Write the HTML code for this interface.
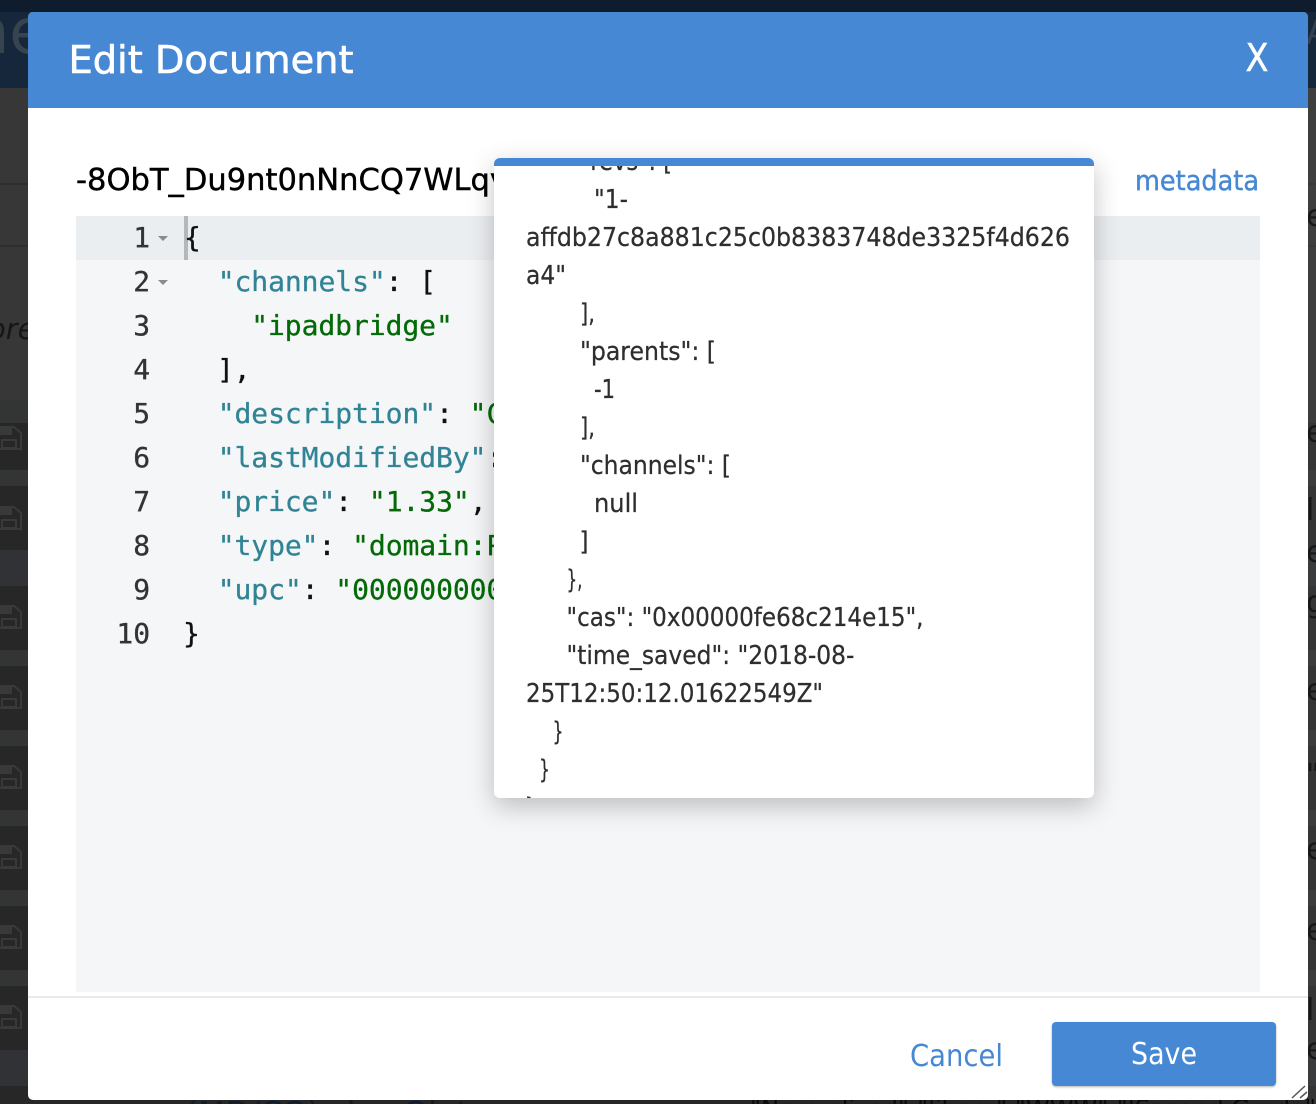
<!DOCTYPE html>
<html><head><meta charset="utf-8"><style>
html,body{margin:0;padding:0;background:#333}
#r{position:relative;width:1316px;height:1104px;overflow:hidden;background:#363736}
.a{position:absolute}
svg{position:absolute;left:0;top:0;overflow:hidden}
.s{font-family:"DejaVu Sans","Liberation Sans",sans-serif}
.m{font-family:"DejaVu Sans Mono","Liberation Mono",monospace;font-size:28px;letter-spacing:-.06px;stroke-width:.3px}
.k{fill:#318495;stroke:#318495}.t{fill:#036a07;stroke:#036a07}.p{fill:#111;stroke:#111}.n{fill:#333;stroke:#333;text-anchor:end}
</style></head><body><div id="r">
<!-- background page -->
<div class="a" style="left:0;top:0;width:1316px;height:12px;background:#0e1c2e"></div>
<div class="a" style="left:0;top:12px;width:1316px;height:76px;background:#17273b"></div>
<div class="a" style="left:0;top:183px;width:1316px;height:2px;background:#2e2e2e"></div>
<div class="a" style="left:0;top:245px;width:1316px;height:2px;background:#2e2e2e"></div>
<div class="a" style="left:0;top:423px;width:1316px;height:681px;background:#272727"></div>
<div class="a" style="left:0;top:400px;width:1316px;height:23px;background:#333434"></div>
<div class="a" style="left:0;top:470px;width:1316px;height:16px;background:#333434"></div>
<div class="a" style="left:0;top:550px;width:1316px;height:36px;background:#303235"></div>
<div class="a" style="left:0;top:650px;width:1316px;height:16px;background:#333434"></div>
<div class="a" style="left:0;top:730px;width:1316px;height:16px;background:#333434"></div>
<div class="a" style="left:0;top:810px;width:1316px;height:16px;background:#333434"></div>
<div class="a" style="left:0;top:890px;width:1316px;height:16px;background:#333434"></div>
<div class="a" style="left:0;top:970px;width:1316px;height:16px;background:#333434"></div>
<div class="a" style="left:0;top:1050px;width:1316px;height:36px;background:#303235"></div>
<div class="a" style="left:1308px;top:88px;width:8px;height:1016px;background:rgba(70,70,70,.45)"></div>
<svg width="1316" height="1104" viewBox="0 0 1316 1104">
<defs><g id="f" fill="none" stroke="#393939" stroke-width="2"><path d="M-6 1H14L21 7V23H-6Z"/><path d="M2 14H16V22H2Z"/><path d="M-6 1H11V8H-6Z" fill="#393939"/></g></defs>
<use href="#f" x="0" y="426"/><use href="#f" x="0" y="506"/><use href="#f" x="0" y="605"/><use href="#f" x="0" y="685"/><use href="#f" x="0" y="765"/><use href="#f" x="0" y="845"/><use href="#f" x="0" y="925"/><use href="#f" x="0" y="1005"/>
<text class="s" x="-30" y="53" font-size="62" fill="#37434f">ne</text>
<text class="s" x="1306" y="44" font-size="34" fill="#34404f">A</text>
<text class="s" x="-12" y="339" font-size="29" font-style="italic" fill="#161616">ore</text>
<g class="s" font-size="30" fill="#171717">
<text x="1306" y="226">e</text><text x="1306" y="442">e</text><text x="1306" y="520">l</text><text x="1306" y="562">e</text><text x="1306" y="612">g</text><text x="1306" y="700">e</text><text x="1306" y="785">"</text><text x="1306" y="859">e</text><text x="1306" y="940">e</text><text x="1306" y="1020">l</text><text x="1306" y="1059">e</text>
</g>
<text class="s" x="186" y="1121" font-size="28" fill="#0e1c2e" textLength="400" lengthAdjust="spacingAndGlyphs">(MD/CO) chocOlate syrup</text>
<text class="s" x="750" y="1118" font-size="26" fill="#0a0a0a" textLength="566" lengthAdjust="spacingAndGlyphs">"Normalized":"libero","WWW":"ISecond Grade"</text>
</svg>
<!-- modal -->
<div class="a" style="left:28px;top:12px;width:1280px;height:1088px;background:#fff;border-radius:5px;overflow:hidden">
 <div class="a" style="left:0;top:0;width:1280px;height:96px;background:#4688d3"></div>
 <div class="a" style="left:48px;top:204px;width:1184px;height:776px;background:#f5f6f8"></div>
 <div class="a" style="left:48px;top:204px;width:1184px;height:44px;background:#ebeef1"></div>
 <div class="a" style="left:156px;top:204px;width:4px;height:44px;background:#b4b8bc"></div>
 <div class="a" style="left:0;top:984px;width:1280px;height:2px;background:#eaeaea"></div>
 <div class="a" style="left:1024px;top:1010px;width:224px;height:64px;background:#4688d3;border-radius:4px;box-shadow:0 1px 2px rgba(0,0,0,.3)"></div>
</div>
<svg width="1316" height="1104" viewBox="0 0 1316 1104">
<g class="s">
<text x="68.5" y="73" font-size="38" fill="#fff" stroke="#fff" stroke-width=".6" textLength="285" lengthAdjust="spacingAndGlyphs">Edit Document</text>
<text x="1245.5" y="71" font-size="38" fill="#fff" stroke="#fff" stroke-width=".5" textLength="23" lengthAdjust="spacingAndGlyphs">X</text>
<text x="76" y="190" font-size="30" fill="#000" stroke="#000" stroke-width=".4" textLength="432" lengthAdjust="spacingAndGlyphs">-8ObT_Du9nt0nNnCQ7WLqv</text>
<text x="1135" y="190" font-size="28" fill="#4688d3" stroke="#4688d3" stroke-width=".4" textLength="124" lengthAdjust="spacingAndGlyphs">metadata</text>
<text x="910" y="1066" font-size="30" fill="#4688d3" textLength="93" lengthAdjust="spacingAndGlyphs">Cancel</text>
<text x="1131" y="1064" font-size="30" fill="#fff" textLength="66" lengthAdjust="spacingAndGlyphs">Save</text>
</g>
<g class="m">
<text class="n" x="150" y="247">1</text><text class="n" x="150" y="291">2</text><text class="n" x="150" y="335">3</text><text class="n" x="150" y="379">4</text><text class="n" x="150" y="423">5</text><text class="n" x="150" y="467">6</text><text class="n" x="150" y="511">7</text><text class="n" x="150" y="555">8</text><text class="n" x="150" y="599">9</text><text class="n" x="150" y="643">10</text>
<text class="p" x="184" y="247">{</text>
<text x="217.7" y="291"><tspan class="k">"channels"</tspan><tspan class="p">: [</tspan></text>
<text class="t" x="251.2" y="335">"ipadbridge"</text>
<text class="p" x="217" y="379">],</text>
<text x="217.7" y="423"><tspan class="k">"description"</tspan><tspan class="p">: </tspan><tspan class="t">"Chocolate</tspan></text>
<text x="217.7" y="467"><tspan class="k">"lastModifiedBy"</tspan><tspan class="p">: </tspan></text>
<text x="217.7" y="511"><tspan class="k">"price"</tspan><tspan class="p">: </tspan><tspan class="t">"1.33"</tspan><tspan class="p">,</tspan></text>
<text x="217.7" y="555"><tspan class="k">"type"</tspan><tspan class="p">: </tspan><tspan class="t">"domain:Product"</tspan></text>
<text x="217.7" y="599"><tspan class="k">"upc"</tspan><tspan class="p">: </tspan><tspan class="t">"000000000</tspan></text>
<text class="p" x="183" y="643">}</text>
</g>
<path d="M158 236H168L163 241Z M158 280H168L163 285Z" fill="#8b8b8b"/>
<path d="M1292 1098L1305 1086M1300 1098L1307 1092" stroke="#555" stroke-width="1.5" fill="none"/>
</svg>
<!-- popup -->
<div class="a" style="left:494px;top:158px;width:600px;height:640px;background:#fff;border-radius:6px;box-shadow:0 8px 26px rgba(0,0,0,.24);overflow:hidden">
<svg width="600" height="640" viewBox="494 158 600 640">
<g class="s" font-size="26" fill="#2e2e2e" stroke="#2e2e2e" stroke-width=".25">
<text x="580" y="170" textLength="92" lengthAdjust="spacingAndGlyphs">"revs": [</text>
<text x="594" y="208" textLength="34" lengthAdjust="spacingAndGlyphs">"1-</text>
<text x="526" y="246" textLength="544" lengthAdjust="spacingAndGlyphs">affdb27c8a881c25c0b8383748de3325f4d626</text>
<text x="526" y="284" textLength="40" lengthAdjust="spacingAndGlyphs">a4"</text>
<text x="580" y="322" textLength="15" lengthAdjust="spacingAndGlyphs">],</text>
<text x="580" y="360" textLength="136" lengthAdjust="spacingAndGlyphs">"parents": [</text>
<text x="594" y="398" textLength="21" lengthAdjust="spacingAndGlyphs">-1</text>
<text x="580" y="436" textLength="15" lengthAdjust="spacingAndGlyphs">],</text>
<text x="580" y="474" textLength="151" lengthAdjust="spacingAndGlyphs">"channels": [</text>
<text x="594" y="512" textLength="44" lengthAdjust="spacingAndGlyphs">null</text>
<text x="579.5" y="550" textLength="9" lengthAdjust="spacingAndGlyphs">]</text>
<text x="566.5" y="588" textLength="16" lengthAdjust="spacingAndGlyphs">},</text>
<text x="566.5" y="626" textLength="357" lengthAdjust="spacingAndGlyphs">"cas": "0x00000fe68c214e15",</text>
<text x="566.5" y="664" textLength="288" lengthAdjust="spacingAndGlyphs">"time_saved": "2018-08-</text>
<text x="526" y="702" textLength="297" lengthAdjust="spacingAndGlyphs">25T12:50:12.01622549Z"</text>
<text x="552.5" y="740" textLength="11" lengthAdjust="spacingAndGlyphs">}</text>
<text x="539" y="778" textLength="11" lengthAdjust="spacingAndGlyphs">}</text>
<text x="525" y="816" textLength="11" lengthAdjust="spacingAndGlyphs">}</text>
</g>
</svg>
<div class="a" style="left:0;top:0;width:600px;height:8px;background:#4688d3"></div>
</div>
</div></body></html>
